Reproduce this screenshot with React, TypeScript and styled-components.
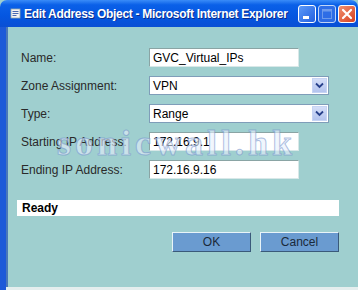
import React from 'react'
import styled, { createGlobalStyle } from 'styled-components'

const GlobalStyle = createGlobalStyle`
    html, body {
        margin: 0;
        padding: 0;
        background: #9fcfcf;
    }
    body {
        font-family: "Liberation Sans", Arial, sans-serif;
    }
`

const rows = [
    { label: 'Name:', value: 'GVC_Virtual_IPs', kind: 'text' },
    { label: 'Zone Assignment:', value: 'VPN', kind: 'select' },
    { label: 'Type:', value: 'Range', kind: 'select' },
    { label: 'Starting IP Address:', value: '172.16.9.1', kind: 'text' },
    { label: 'Ending IP Address:', value: '172.16.9.16', kind: 'text' },
]

const App = () => {
    return (
        <Window>
            <GlobalStyle />
            <TitleBar>
                <TitleIcon viewBox="0 0 11 11">
                    <rect x="1" y="1" width="9" height="9" fill="#f4f4f4" stroke="#9aa" strokeWidth="0.8" />
                    <path d="M2.5 3.5h6M2.5 5.5h6M2.5 7.5h4" stroke="#4a6ab0" strokeWidth="1" />
                </TitleIcon>
                <TitleText>Edit Address Object - Microsoft Internet Explorer</TitleText>
                <Controls>
                    <CtrlButton>
                        <svg width="16" height="16" viewBox="0 0 16 16">
                            <rect x="4" y="10" width="6" height="3" fill="#fff" />
                        </svg>
                    </CtrlButton>
                    <CtrlButton disabled>
                        <svg width="16" height="16" viewBox="0 0 16 16">
                            <rect x="3.5" y="3.5" width="9" height="9" fill="none" stroke="#8fb0f0" strokeWidth="1" />
                            <rect x="3.5" y="3.5" width="9" height="2" fill="#8fb0f0" />
                        </svg>
                    </CtrlButton>
                    <CloseButton>
                        <svg width="16" height="16" viewBox="0 0 16 16">
                            <path d="M4 4l8 8M12 4l-8 8" stroke="#fff" strokeWidth="2.2" strokeLinecap="round" />
                        </svg>
                    </CloseButton>
                </Controls>
            </TitleBar>
            <Body>
                <Content>
                    <Form>
                        {rows.map((r) => (
                            <React.Fragment key={r.label}>
                                <Label>{r.label}</Label>
                                {r.kind === 'select' ? (
                                    <SelectBox>
                                        <span>{r.value}</span>
                                        <Arrow>
                                            <svg width="9" height="7" viewBox="0 0 9 7">
                                                <path d="M1 1.5l3.5 3.5 3.5-3.5" fill="none" stroke="#27408b" strokeWidth="1.8" />
                                            </svg>
                                        </Arrow>
                                    </SelectBox>
                                ) : (
                                    <TextBox>{r.value}</TextBox>
                                )}
                            </React.Fragment>
                        ))}
                    </Form>
                    <Status>Ready</Status>
                    <Buttons>
                        <ActionButton>OK</ActionButton>
                        <ActionButton>Cancel</ActionButton>
                    </Buttons>
                    <Watermark>sonicwall.hk</Watermark>
                </Content>
            </Body>
            <BottomEdge />
        </Window>
    )
}

export default App

const Window = styled.div`
    width: 358px;
    height: 290px;
    display: flex;
    flex-direction: column;
    overflow: hidden;
    background: #9fcfcf;
`

const TitleBar = styled.div`
    height: 27px;
    flex: none;
    display: flex;
    align-items: center;
    padding: 0 2px 0 10px;
    border-radius: 7px 7px 0 0;
    background: linear-gradient(#3a8cf8 0%, #0a60e8 18%, #0556e0 60%, #0a4fd4 100%);
    box-sizing: border-box;
`

const TitleIcon = styled.svg`
    width: 11px;
    height: 11px;
    margin-right: 3px;
    flex: none;
`

const TitleText = styled.div`
    color: #fff;
    font-weight: bold;
    font-size: 12px;
    letter-spacing: -0.3px;
    white-space: nowrap;
    overflow: hidden;
    text-shadow: 1px 1px 0 #0a2a8a;
    flex: 1;
    min-width: 0;
`

const Controls = styled.div`
    display: flex;
    gap: 2px;
    flex: none;
`

const CtrlButton = styled.div<{ disabled?: boolean }>`
    width: 16px;
    height: 16px;
    border: 1px solid #fff;
    border-radius: 3px;
    background: ${({ disabled }) => disabled ? '#3c74e8' : 'linear-gradient(135deg, #5d9af8, #2260e0)'};
    opacity: ${({ disabled }) => disabled ? 0.75 : 1};
    display: flex;
`

const CloseButton = styled(CtrlButton)`
    background: linear-gradient(135deg, #f09070, #d84020);
`

const Body = styled.div`
    flex: 1;
    display: flex;
    border-left: 6px solid #1d5ad8;
`

const Content = styled.div`
    flex: 1;
    position: relative;
    border-left: 2px solid #4a78b8;
    padding: 21px 19px 0 13px;
    display: flex;
    flex-direction: column;
`

const Form = styled.div`
    display: grid;
    grid-template-columns: 128px auto;
    row-gap: 9px;
    align-items: center;
    justify-items: start;
`

const Label = styled.div`
    font-size: 12px;
    color: #2a2a2a;
`

const TextBox = styled.div`
    width: 150px;
    height: 19px;
    box-sizing: border-box;
    background: #fff;
    border: 1px solid #8aa4a4;
    border-right-color: #d8e8e8;
    border-bottom-color: #d8e8e8;
    font-size: 12px;
    color: #000;
    padding: 2px 3px;
    line-height: 14px;
`

const SelectBox = styled(TextBox)`
    width: 180px;
    display: flex;
    align-items: center;
    justify-content: space-between;
    padding: 0 1px 0 3px;
    border: 1px solid #7f9db9;
`

const Arrow = styled.div`
    width: 15px;
    height: 15px;
    background: linear-gradient(#d4def8, #b4c4ee);
    border: 1px solid #c6d4f4;
    box-sizing: border-box;
    display: flex;
    align-items: center;
    justify-content: center;
`

const Status = styled.div`
    margin-top: 21px;
    margin-left: -4px;
    width: 322px;
    height: 16px;
    background: #fff;
    font-weight: bold;
    font-size: 12px;
    line-height: 16px;
    padding-left: 5px;
    box-sizing: border-box;
`

const Buttons = styled.div`
    display: flex;
    justify-content: flex-end;
    gap: 9px;
    margin-top: 16px;
    margin-right: 0;
`

const ActionButton = styled.div`
    width: 79px;
    height: 20px;
    box-sizing: border-box;
    background: #6a9bd0;
    border: 1px solid;
    border-color: #e8f4f8 #3a5a7a #3a5a7a #e8f4f8;
    font-size: 12px;
    color: #1a2a3a;
    display: flex;
    align-items: center;
    justify-content: center;
`

const Watermark = styled.div`
    position: absolute;
    left: 49px;
    top: 98px;
    font-family: "Liberation Serif", serif;
    font-weight: bold;
    font-size: 36px;
    line-height: 36px;
    letter-spacing: 4px;
    white-space: nowrap;
    color: rgba(232, 240, 252, 0.6);
    -webkit-text-stroke: 1px rgba(110, 140, 200, 0.55);
    pointer-events: none;
`

const BottomEdge = styled.div`
    height: 3px;
    flex: none;
    background: #e4eeee;
    border-left: 6px solid #1d5ad8;
`
